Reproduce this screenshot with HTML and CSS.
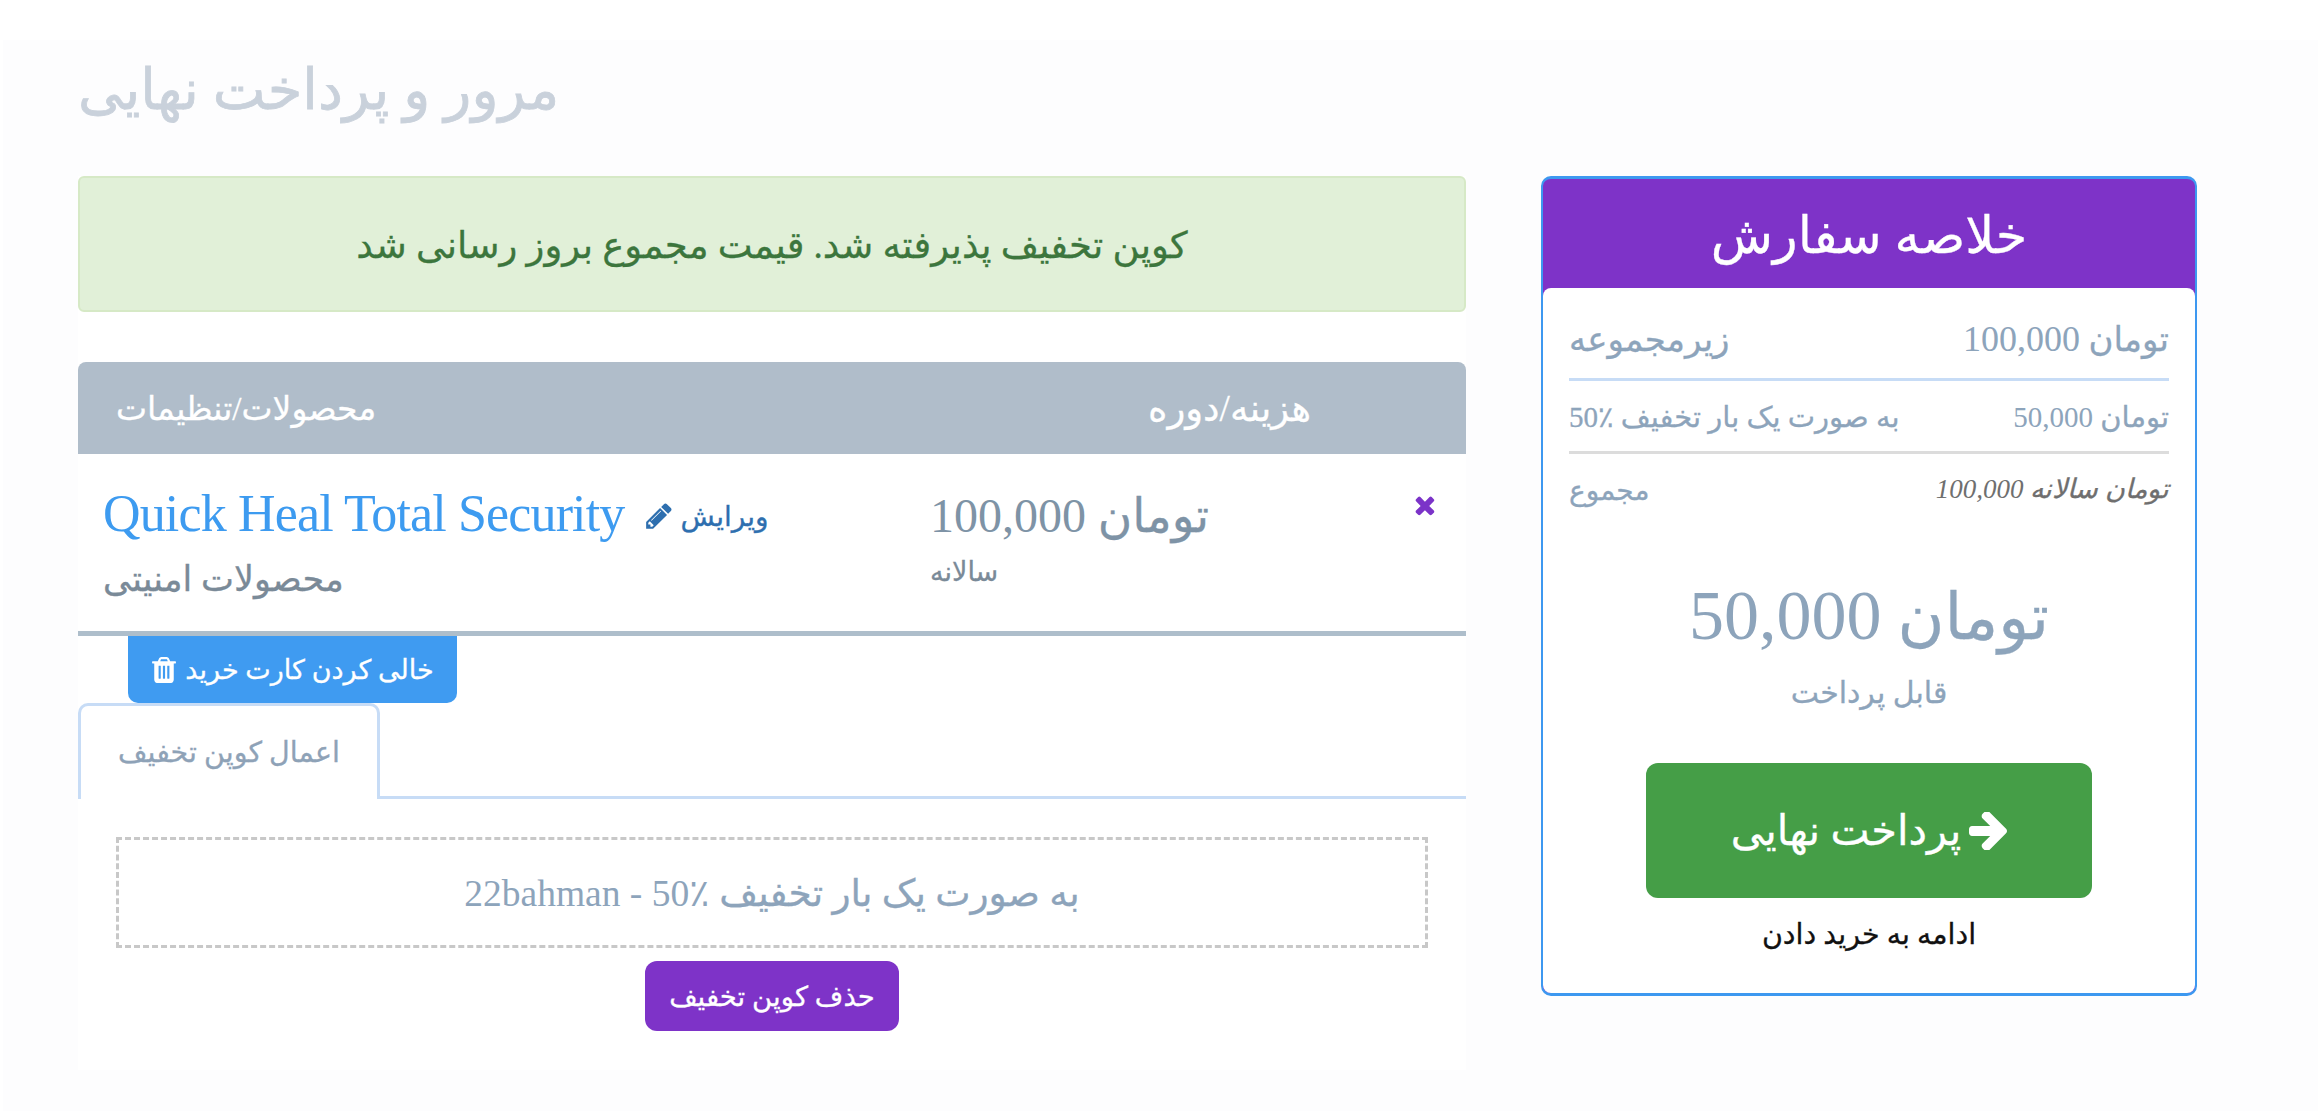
FILE: index.html
```html
<!DOCTYPE html>
<html lang="fa">
<head>
<meta charset="utf-8">
<title>مرور و پرداخت نهایی</title>
<link rel="stylesheet" href="styles.css">
</head>
<body>
<div class="page">
  <h1 class="title">مرور و پرداخت نهایی</h1>
  <div class="columns">
    <main class="main">
      <div class="alert">کوپن تخفیف پذیرفته شد. قیمت مجموع بروز رسانی شد</div>
      <div class="thead">
        <div class="th-product">محصولات/تنظیمات</div>
        <div class="th-price">هزینه/دوره</div>
      </div>
      <div class="row">
        <div class="cell-product">
          <div class="product-line">
            <a class="product-name">Quick Heal Total Security</a>
            <a class="edit"><svg class="icon-edit" viewBox="0 0 1792 1792"><path fill="currentColor" d="M491 1536l91-91-235-235-91 91v107h128v128h107zm523-928q0-22-22-22-10 0-17 7l-542 542q-7 7-7 17 0 22 22 22 10 0 17-7l542-542q7-7 7-17zm-54-192l416 416-832 832h-416v-416zm683 96q0 53-37 90l-166 166-416-416 166-165q36-38 90-38 53 0 91 38l235 234q37 39 37 91z"/></svg><span>ویرایش</span></a>
          </div>
          <div class="product-group">محصولات امنیتی</div>
        </div>
        <div class="cell-price">
          <div class="price"><span class="num">100,000</span> تومان</div>
          <div class="cycle">سالانه</div>
        </div>
        <div class="cell-remove"><svg class="icon-remove" viewBox="200 200 1400 1400"><path fill="currentColor" d="M1490 1322q0 40-28 68l-136 136q-28 28-68 28t-68-28l-294-294-294 294q-28 28-68 28t-68-28l-136-136q-28-28-28-68t28-68l294-294-294-294q-28-28-28-68t28-68l136-136q28-28 68-28t68 28l294 294 294-294q28-28 68-28t68 28l136 136q28 28 28 68t-28 68l-294 294 294 294q28 28 28 68z"/></svg></div>
      </div>
      <button class="btn-empty"><svg class="icon-trash" viewBox="128 128 1536 1536"><path fill="currentColor" d="M704 1376v-704q0-14-9-23t-23-9h-64q-14 0-23 9t-9 23v704q0 14 9 23t23 9h64q14 0 23-9t9-23zm256 0v-704q0-14-9-23t-23-9h-64q-14 0-23 9t-9 23v704q0 14 9 23t23 9h64q14 0 23-9t9-23zm256 0v-704q0-14-9-23t-23-9h-64q-14 0-23 9t-9 23v704q0 14 9 23t23 9h64q14 0 23-9t9-23zm-544-992h448l-48-117q-7-9-17-11h-317q-10 2-17 11zm928 32v64q0 14-9 23t-23 9h-96v948q0 83-47 143.500t-113 60.500h-832q-66 0-113-58.500t-47-141.500v-952h-96q-14 0-23-9t-9-23v-64q0-14 9-23t23-9h309l70-167q15-37 54-63t79-26h320q40 0 79 26t54 63l70 167h309q14 0 23 9t9 23z"/></svg><span>خالی کردن کارت خرید</span></button>
      <div class="tabs"><div class="tab">اعمال کوپن تخفیف</div></div>
      <div class="tab-pane">
        <div class="coupon"><span class="coupon-code">22bahman - 50٪</span> به صورت یک بار تخفیف</div>
        <button class="btn-remove-coupon">حذف کوپن تخفیف</button>
      </div>
    </main>
    <aside class="summary">
      <div class="summary-head">خلاصه سفارش</div>
      <div class="summary-body">
        <div class="line line-sub"><span>زیرمجموعه</span><span><span class="num">100,000</span> تومان</span></div>
        <div class="line line-disc"><span>50٪ به صورت یک بار تخفیف</span><span><span class="num">50,000</span> تومان</span></div>
        <div class="line line-total"><span>مجموع</span><em><span class="num">100,000</span> تومان سالانه</em></div>
        <div class="total"><span class="num">50,000</span> تومان</div>
        <div class="payable">قابل پرداخت</div>
        <button class="btn-checkout"><span>پرداخت نهایی</span><svg class="icon-arrow" viewBox="128 192 1472 1408"><path fill="currentColor" d="M1600 960q0 54-37 91l-651 651q-39 37-91 37-51 0-90-37l-75-75q-38-38-38-91t38-91l293-293h-704q-52 0-84.500-37.500t-32.500-90.500v-128q0-53 32.500-90.500t84.500-37.500h704l-293-294q-38-36-38-90t38-90l75-75q38-38 90-38 53 0 91 38l651 651q37 35 37 90z" transform="translate(0 -64)"/></svg></button>
        <div class="continue">ادامه به خرید دادن</div>
      </div>
    </aside>
  </div>
</div>
</body>
</html>
```
FILE: styles.css
```css
* { box-sizing: border-box; }
html, body { margin: 0; padding: 0; background: #fff; }
body {
  height: 1111px;
  overflow: hidden;
  font-family: "Liberation Serif", "DejaVu Sans", serif;
  color: #8da4bb;
  -webkit-text-stroke: 0.3px currentColor;
}
button { font-family: inherit; border: 0; cursor: pointer; padding: 0; }
svg { display: block; }
.num, .product-name, .coupon-code { -webkit-text-stroke: 0; }
.page {
  margin: 40px 0 0 3px;
  padding: 0 0 0 75px;
  height: 1071px;
  background: #fdfdfe;
}
.title {
  margin: 0;
  height: 136px;
  padding-top: 20px;
  font-size: 56px;
  line-height: 60px;
  font-weight: 400;
  color: #c9d1db;
  -webkit-text-stroke: 0.8px currentColor;
}
.columns { display: flex; gap: 75px; align-items: flex-start; }
.main { width: 1388px; flex: none; background: #fff; }
.alert {
  height: 136px;
  display: flex;
  align-items: center;
  justify-content: center;
  font-size: 37px;
  color: #3c763d;
  background: #e1f0d8;
  border: 2px solid #d6e9c6;
  border-radius: 6px;
  margin-bottom: 50px;
  padding-top: 2px;
}
.thead {
  height: 92px;
  display: flex;
  align-items: center;
  background: #b0bdca;
  border-radius: 8px 8px 0 0;
  color: #fff;
  font-size: 33px;
}
.th-product { padding-left: 38px; width: 1070px; }
.th-price { flex: 1; font-size: 37px; }
.row {
  height: 182px;
  display: flex;
  border-bottom: 5px solid #aebecb;
}
.cell-product { width: 852px; padding: 31px 0 0 25px; }
.product-line { display: flex; align-items: baseline; gap: 20px; }
.product-name { font-size: 52px; letter-spacing: -0.85px; line-height: 58px; color: #3d9bf0; }
.edit { display: flex; align-items: center; gap: 6px; font-size: 28px; color: #2e6faf; }
.icon-edit { width: 30px; height: 30px; }
.product-group { margin-top: 13px; font-size: 35px; line-height: 48px; color: #7a8a98; }
.cell-price { width: 484px; padding-top: 32px; }
.price { font-size: 47px; line-height: 60px; color: #7e93a6; }
.price .num { font-size: 48px; }
.cycle { font-size: 27px; margin-top: 10px; color: #7a8a98; }
.cell-remove { flex: 1; padding-top: 40px; color: #7b33c8; }
.icon-remove { width: 22px; height: 22px; }
.btn-empty {
  display: flex;
  align-items: center;
  justify-content: center;
  gap: 8px;
  margin-left: 50px;
  width: 329px;
  height: 67px;
  font-size: 27px;
  color: #fff;
  background: #3f9bf1;
  border-radius: 0 0 10px 10px;
}
.icon-trash { width: 26px; height: 30px; }
.tabs {
  height: 96px;
  border-bottom: 3px solid #c7dcf6;
}
.tab {
  width: 302px;
  height: 96px;
  display: flex;
  align-items: center;
  justify-content: center;
  font-size: 28.5px;
  color: #8ea2b7;
  background: #fff;
  border: 3px solid #c7dcf6;
  border-bottom: 0;
  border-radius: 10px 10px 0 0;
}
.tab-pane {
  padding: 38px 38px 39px;
  display: flex;
  flex-direction: column;
  align-items: center;
  height: 271px;
}
.coupon {
  width: 100%;
  height: 111px;
  display: flex;
  gap: 10px;
  align-items: center;
  justify-content: center;
  border: 3px dashed #c8c8c8;
  font-size: 37.5px;
  color: #8da4bb;
}
.btn-remove-coupon {
  margin-top: 13px;
  width: 254px;
  height: 70px;
  font-size: 27.5px;
  color: #fff;
  background: #7e33c8;
  border-radius: 12px;
}
.summary {
  width: 656px;
  height: 820px;
  flex: none;
  background: #7e33c8;
  border: solid #3d98f0;
  border-width: 3px 2px;
  border-radius: 10px;
  display: flex;
  flex-direction: column;
}
.summary-head {
  height: 109px;
  padding-top: 4px;
  display: flex;
  align-items: center;
  justify-content: center;
  font-size: 51px;
  color: #fff;
}
.summary-body {
  flex: 1;
  background: #fff;
  border-radius: 8px;
  padding: 0 26px;
  display: flex;
  flex-direction: column;
}
.line { display: flex; justify-content: space-between; }
.line-sub {
  height: 93px;
  padding-top: 12px;
  align-items: center;
  font-size: 34px;
  border-bottom: 3px solid #c7dcf6;
}
.line-sub .num { font-size: 36px; }
.line-disc {
  height: 73px;
  align-items: center;
  font-size: 29px;
  border-bottom: 3px solid #dcdcdc;
  padding-top: 2px;
}
.line-total { height: 86px; padding-top: 20px; align-items: flex-start; font-size: 28px; }
.line-total em { font-size: 27px; color: #6f6f6f; line-height: 30px; }
.total { margin-top: 34px; text-align: center; font-size: 64px; line-height: 84px; color: #8da4bb; }
.total .num { font-size: 70px; }
.payable { margin-top: 15px; text-align: center; font-size: 30px; }
.btn-checkout {
  margin: 53px auto 0;
  width: 446px;
  height: 135px;
  display: flex;
  align-items: center;
  justify-content: center;
  gap: 8px;
  font-size: 41.5px;
  color: #fff;
  background: #459e47;
  border-radius: 12px;
}
.icon-arrow { width: 38px; height: 38px; }
.continue { margin-top: 20px; text-align: center; font-size: 28.5px; color: #111; }
```
